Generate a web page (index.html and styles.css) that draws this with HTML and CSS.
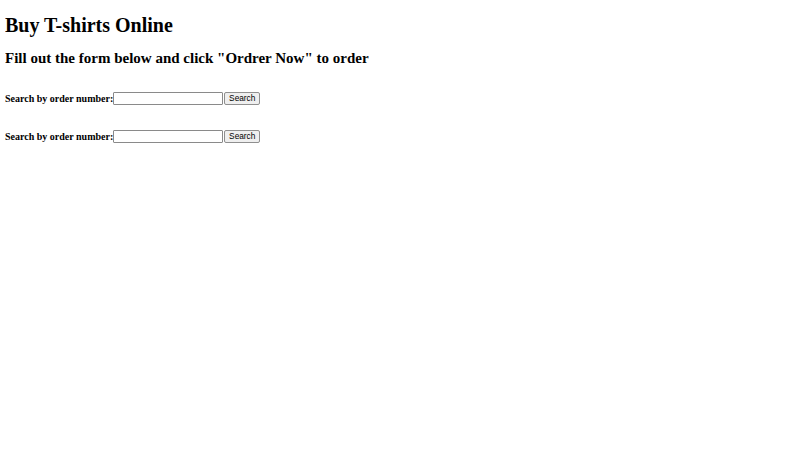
FILE: index.html
```html
<!DOCTYPE html>
<html>
<head>
<meta charset="utf-8">
<title>Buy T-shirts Online</title>
<link rel="stylesheet" href="styles.css">
</head>
<body>
<h1 class="title">Buy T-shirts Online</h1>
<h2 class="subtitle">Fill out the form below and click "Ordrer Now" to order</h2>
<form class="row">
  <label class="label" for="o1">Search by order number:</label><input class="field" id="o1" type="text"><button class="btn" type="button">Search</button>
</form>
<form class="row">
  <label class="label" for="o2">Search by order number:</label><input class="field" id="o2" type="text"><button class="btn" type="button">Search</button>
</form>
</body>
</html>
```
FILE: styles.css
```css
html, body {
  background: #ffffff;
}
body {
  margin: 5px;
  font-family: "Liberation Serif", "Times New Roman", serif;
  color: #000;
}
.title {
  font-size: 20px;
  font-weight: bold;
  margin: 8.6px 0 13.4px 0;
  line-height: 1.15;
}
.subtitle {
  font-size: 15px;
  font-weight: bold;
  margin: 12.45px 0;
  line-height: 1.15;
}
.row {
  display: flex;
  align-items: center;
  margin: 25px 0 0 0;
  height: 13px;
}
.label {
  font-size: 10px;
  font-weight: bold;
  line-height: 13px;
}
.field {
  box-sizing: border-box;
  width: 110px;
  height: 13px;
  margin: 0;
  padding: 0 1px;
  border: 1px solid #8a8a8a;
  border-radius: 1px;
  background: #fff;
  font-size: 8.3px;
}
.btn {
  box-sizing: border-box;
  width: 36px;
  height: 13px;
  margin: 0 0 0 1px;
  padding: 0;
  border: 1px solid #8f8f8f;
  border-radius: 2px;
  background: #efefef;
  font-family: "Liberation Sans", Arial, sans-serif;
  font-size: 8.3px;
  line-height: 11px;
  color: #000;
}
```
